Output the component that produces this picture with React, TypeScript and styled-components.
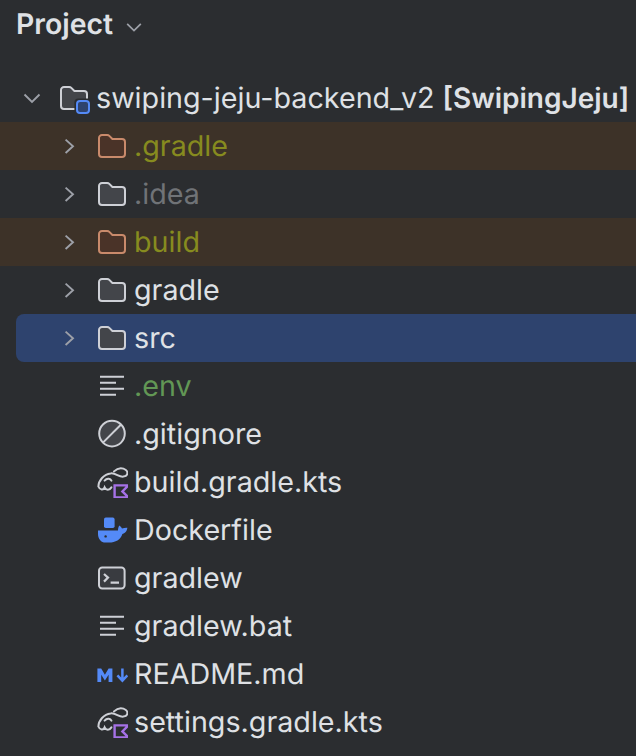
import React from "react";
import styled, { createGlobalStyle } from "styled-components";

const Global = createGlobalStyle`
  html, body { margin: 0; padding: 0; background: #2b2d30; }
  body { width: 636px; height: 756px; overflow: hidden; font-family: Inter, "Liberation Sans", sans-serif; text-rendering: geometricPrecision; }
`;

const Panel = styled.div`
  width: 636px;
  height: 756px;
  background: #2b2d30;
  color: #dfe1e5;
  overflow: hidden;
`;

const Header = styled.header`
  height: 48px;
  padding-left: 16px;
  display: flex;
  align-items: center;
  gap: 11px;
`;

const Title = styled.h1`
  margin: 0;
  font-size: 28.4px;
  line-height: 48px;
  font-weight: 600;
  color: #dfe1e5;
`;

const HeaderCaret = styled.span`
  display: flex;
  margin-top: 5px;
`;

const Tree = styled.div`
  padding-top: 26px;
  display: flex;
  flex-direction: column;
`;

type Tone = "normal" | "excluded" | "ignored" | "env";
const toneColor: Record<Tone, string> = {
  normal: "#dfe1e5",
  excluded: "#878b1f",
  ignored: "#707377",
  env: "#629755",
};

const Row = styled.div<{ $bg?: string; $selected?: boolean; $root?: boolean }>`
  height: 48px;
  display: flex;
  align-items: center;
  flex: none;
  white-space: nowrap;
  background: ${(p) => p.$bg ?? "transparent"};
  margin-left: ${(p) => (p.$selected ? 16 : 0)}px;
  border-radius: ${(p) => (p.$selected ? "8px 0 0 8px" : "0")};
  padding-left: ${(p) => (p.$root ? 21 : p.$selected ? 42 : 58)}px;
`;

const Arrow = styled.span`
  width: 22px;
  height: 32px;
  flex: none;
  display: flex;
  align-items: center;
  justify-content: center;
`;

const ArrowSlot = styled.span`
  width: 22px;
  flex: none;
`;

const IconSlot = styled.span<{ $gapLeft: number }>`
  width: 32px;
  height: 32px;
  flex: none;
  margin-left: ${(p) => p.$gapLeft}px;
  display: flex;
`;

const Label = styled.span<{ $tone: Tone }>`
  margin-left: 6px;
  font-size: 28.7px;
  font-weight: 440;
  line-height: 48px;
  color: ${(p) => toneColor[p.$tone]};
`;

const Module = styled.strong`
  margin-left: 8px;
  font-size: 28px;
  font-weight: 600;
`;

const Chevron = () => (
  <svg width="22" height="22" viewBox="0 0 22 22" fill="none" stroke="#9da0a8" strokeWidth="1.9">
    <path d="M7.6 4.6 15 11.3 7.6 18" />
  </svg>
);

const ChevronDown = ({ size = 22 }: { size?: number }) => (
  <svg width={size} height={size} viewBox="0 0 22 22" fill="none" stroke="#9da0a8" strokeWidth="1.9">
    <path d="M3.5 7.5 11 15 18.5 7.5" />
  </svg>
);

const Svg: React.FC<{ children: React.ReactNode }> = ({ children }) => (
  <svg width="32" height="32" viewBox="0 0 16 16" fill="none">{children}</svg>
);

const FOLDER = "M1.5 4A1.5 1.5 0 0 1 3 2.5h2.6a1.5 1.5 0 0 1 1.06.44L8.2 4.5H13A1.5 1.5 0 0 1 14.5 6v6A1.5 1.5 0 0 1 13 13.5H3A1.5 1.5 0 0 1 1.5 12z";

const Folder = ({ orange }: { orange?: boolean }) => (
  <Svg>
    <path d={FOLDER} fill={orange ? "#4a3328" : "#43454a"} stroke={orange ? "#c98a6b" : "#ced0d6"} strokeWidth="1" />
  </Svg>
);

const RootFolder = () => (
  <Svg>
    <path d={FOLDER} fill="#43454a" stroke="#ced0d6" strokeWidth="1" />
    <rect x="8.2" y="8.2" width="8.6" height="8.6" rx="2" fill="#2b2d30" />
    <rect x="9.5" y="9.5" width="6" height="6" rx="1.5" fill="#2e436e" stroke="#548af7" strokeWidth="1" />
  </Svg>
);

const Lines = () => (
  <Svg>
    <path d="M2 3.4h12M2 6.4h8M2 9.4h12M2 12.4h8" stroke="#ced0d6" strokeWidth="1" />
  </Svg>
);

const Ignore = () => (
  <Svg>
    <circle cx="8" cy="7.8" r="6.4" fill="#43454a" stroke="#ced0d6" strokeWidth="1" />
    <path d="M3.6 12.2 12.4 3.4" stroke="#ced0d6" strokeWidth="1" />
  </Svg>
);

const GradleKts = () => (
  <Svg>
    <path
      d="M1.2 10.3C1.2 7.3 4 4 7.3 3.7 9.8 3.3 11.5 5.7 13.7 5.3 16.2 5 16.5 2.3 13.7 1.3 12.2 .8 10.4 1.3 9 2.7M1.2 10.3C2 12 3.7 12.3 4.3 10.7 5 12.3 6.7 12.3 7.7 10.7M4.3 7.3C5.7 5.7 7.3 6.5 7.7 7.3"
      stroke="#ced0d6" strokeWidth="1" strokeLinecap="round" />
    <path d="M9.3 9.7H16.2L13.2 12.7 16.2 15.7H9.3z" fill="#2b2d30" stroke="#a571e6" strokeWidth="1.2" />
  </Svg>
);

const Docker = () => (
  <Svg>
    <rect x="4" y="1.8" width="5.3" height="5.2" rx=".9" fill="#548af7" />
    <path d="M1 8.2H11C11 7.2 11.2 6.3 11.7 5.7 12.3 6.1 12.8 6.7 13 7.3 13.8 7 14.8 6.8 15.7 6.9 15.5 8.2 15 9 14.4 9.4 14 9.7 13.6 9.9 13.2 10 12.3 12.8 9.8 14.3 6.5 14.3H4.8C2.5 14.3 1 12.4 1 10z" fill="#548af7" />
    <circle cx="4.8" cy="11.2" r=".6" fill="#2b2d30" />
  </Svg>
);

const Terminal = () => (
  <Svg>
    <rect x="1.5" y="2.8" width="12.8" height="10.4" rx="1.6" fill="#393b40" stroke="#ced0d6" strokeWidth="1" />
    <path d="M4 6 6 7.8 4 9.8M7.3 10.3h4.2" stroke="#ced0d6" strokeWidth="1.1" />
  </Svg>
);

const Markdown = () => (
  <Svg>
    <path d="M.7 12V5.3H2.6L4.45 8.4 6.3 5.3H8.2V12H6.3V8.4L4.45 11.2 2.6 8.4V12z" fill="#548af7" />
    <path d="M13.2 5.3V11.2M10.7 8.7 13.2 11.3 15.7 8.7" stroke="#548af7" strokeWidth="1.25" />
  </Svg>
);

type Item = { name: string; icon: React.ReactNode; tone?: Tone; bg?: string; selected?: boolean; arrow?: boolean };

const BROWN = "#3d3228";

const items: Item[] = [
  { name: ".gradle", icon: <Folder orange />, tone: "excluded", bg: BROWN, arrow: true },
  { name: ".idea", icon: <Folder />, tone: "ignored", arrow: true },
  { name: "build", icon: <Folder orange />, tone: "excluded", bg: BROWN, arrow: true },
  { name: "gradle", icon: <Folder />, arrow: true },
  { name: "src", icon: <Folder />, bg: "#2e436e", selected: true, arrow: true },
  { name: ".env", icon: <Lines />, tone: "env" },
  { name: ".gitignore", icon: <Ignore /> },
  { name: "build.gradle.kts", icon: <GradleKts /> },
  { name: "Dockerfile", icon: <Docker /> },
  { name: "gradlew", icon: <Terminal /> },
  { name: "gradlew.bat", icon: <Lines /> },
  { name: "README.md", icon: <Markdown /> },
  { name: "settings.gradle.kts", icon: <GradleKts /> },
];

export default function App() {
  return (
    <Panel>
      <Global />
      <Header>
        <Title>Project</Title>
        <HeaderCaret><ChevronDown size={20} /></HeaderCaret>
      </Header>
      <Tree>
        <Row $root>
          <Arrow><ChevronDown /></Arrow>
          <IconSlot $gapLeft={15}><RootFolder /></IconSlot>
          <Label $tone="normal">swiping-jeju-backend_v2<Module>[SwipingJeju]</Module></Label>
        </Row>
        {items.map((it) => (
          <Row key={it.name} $bg={it.bg} $selected={it.selected}>
            {it.arrow ? <Arrow><Chevron /></Arrow> : <ArrowSlot />}
            <IconSlot $gapLeft={16}>{it.icon}</IconSlot>
            <Label $tone={it.tone ?? "normal"}>{it.name}</Label>
          </Row>
        ))}
      </Tree>
    </Panel>
  );
}
